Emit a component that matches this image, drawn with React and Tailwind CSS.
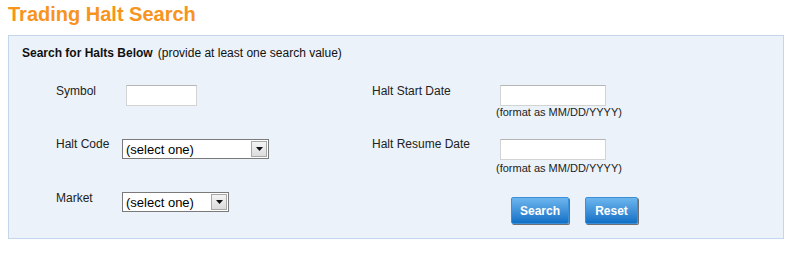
const Select = ({ width }) => (
  <div
    className="mt-[1px] flex h-[20px] items-center border border-[#7a7a7a] bg-white pl-[3px] pr-[1px]"
    style={{ width }}
  >
    <span className="flex-1 text-[13px] leading-none text-black">(select one)</span>
    <span className="flex h-[16px] w-[16px] items-center justify-center border border-[#a8a8a8] bg-gradient-to-b from-[#f4f4f4] to-[#dcdcdc]">
      <svg width="7" height="4" viewBox="0 0 7 4">
        <path d="M0 0h7L3.5 4z" fill="#111" />
      </svg>
    </span>
  </div>
);

const TextBox = ({ w }) => (
  <div className={`mt-[1px] h-[21px] ${w} border border-[#d3d3d3] border-t-[#b5b5b5] bg-white`} />
);

const Btn = ({ children, w }) => (
  <button
    className={`${w} h-[27px] rounded-[2px] border border-[#3b8fd6] bg-gradient-to-b from-[#6cb6ee] to-[#0a70c6] text-[12px] font-bold text-white shadow-[1px_1px_0_#6f6f6f]`}
  >
    {children}
  </button>
);

export default function App() {
  return (
    <div className="min-h-screen w-full bg-white px-[8px] pt-[1px] text-[12px] text-[#222]" style={{ fontFamily: '"Liberation Sans", Arial, sans-serif' }}>
      <h1 className="h-[34px] text-[20px] font-bold leading-[26px] text-[#f7941d]">Trading Halt Search</h1>

      <div className="h-[204px] w-[776px] border border-[#c3d6ea] bg-[#ebf2f9] pl-[13px] pt-[10px]">
        <p className="leading-[14px] text-[#111]">
          <span className="font-bold">Search for Halts Below</span>
          <span className="ml-[5px]">(provide at least one search value)</span>
        </p>

        <div className="ml-[34px] mt-[24px] grid grid-cols-[66px_250px_128px_1fr] grid-rows-[53px_54px_40px] leading-[14px]">
          {/* row 1 */}
          <span>Symbol</span>
          <div className="ml-[4px]"><TextBox w="w-[71px]" /></div>
          <span>Halt Start Date</span>
          <div>
            <TextBox w="w-[106px]" />
            <p className="-ml-[4px] text-[11px] leading-[13px]">(format as MM/DD/YYYY)</p>
          </div>

          {/* row 2 */}
          <span>Halt Code</span>
          <div className="pt-[1px]"><Select width={147} /></div>
          <span>Halt Resume Date</span>
          <div className="pt-[1px]">
            <TextBox w="w-[106px]" />
            <p className="-ml-[4px] mt-[2px] text-[11px] leading-[13px]">(format as MM/DD/YYYY)</p>
          </div>

          {/* row 3 */}
          <span>Market</span>
          <div><Select width={107} /></div>
          <span />
          <div className="ml-[11px] mt-[6px] flex gap-[16px]">
            <Btn w="w-[58px]">Search</Btn>
            <Btn w="w-[53px]">Reset</Btn>
          </div>
        </div>
      </div>
    </div>
  );
}
